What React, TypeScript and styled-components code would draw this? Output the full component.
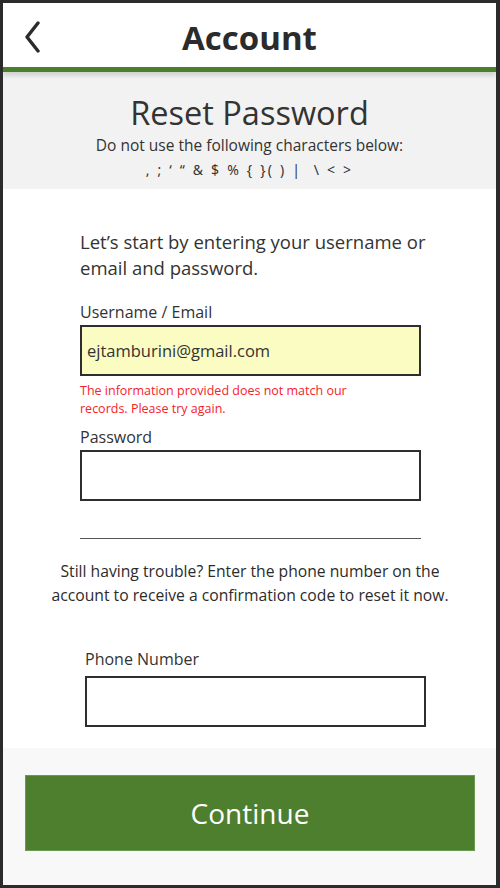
import React from "react";
import styled, { createGlobalStyle } from "styled-components";

const Global = createGlobalStyle`
  html, body { margin: 0; padding: 0; background: #2b2b2b; }
  * { box-sizing: border-box; }
  body { font-family: "Open Sans", "Noto Sans", Arial, sans-serif; color: #333; }
`;

const Frame = styled.div`
  width: 500px;
  height: 888px;
  border-style: solid;
  border-color: #2b2b2b;
  border-width: 3px 4px 3px 3px;
  display: flex;
  flex-direction: column;
  background: #fff;
  overflow: hidden;
`;

const Header = styled.header`
  position: relative;
  height: 64px;
  flex: none;
  display: flex;
  align-items: center;
  justify-content: center;
  background: #fff;
`;

const BackButton = styled.button`
  position: absolute;
  left: 20px;
  top: 18px;
  width: 18px;
  height: 32px;
  border: 0;
  padding: 0;
  background: none;
  display: flex;
`;

const HeaderTitle = styled.h1`
  margin: 0;
  font-size: 33px;
  font-weight: 700;
  color: #2b2b2b;
  line-height: 1;
  transform: translateY(2px);
`;

const GreenBar = styled.div`
  height: 5px;
  flex: none;
  background: #4a7f2d;
  position: relative;
  z-index: 2;
  box-shadow: 0 3px 5px rgba(0, 0, 0, 0.18);
`;

const Banner = styled.section`
  height: 117px;
  flex: none;
  background: #f2f2f2;
  display: flex;
  flex-direction: column;
  align-items: center;
  padding-top: 20px;
`;

const BannerTitle = styled.h2`
  margin: 0;
  font-size: 32.5px;
  font-weight: 400;
  line-height: 42px;
  color: #333;
`;

const BannerNote = styled.p`
  margin: 0;
  font-size: 15.5px;
  line-height: 22px;
  color: #333;
`;

const CharList = styled.p`
  margin: 3px 0 0;
  font-family: "Noto Sans", "DejaVu Sans", sans-serif;
  font-size: 14px;
  line-height: 22px;
  color: #333;
  white-space: pre;
  letter-spacing: 2.2px;
`;

const Content = styled.main`
  flex: 1;
  background: #fff;
  display: flex;
  flex-direction: column;
  padding: 40px 0 0 77px;
`;

const Intro = styled.p`
  margin: 0 0 20px;
  width: 360px;
  font-size: 18.5px;
  line-height: 26px;
  color: #333;
`;

const Field = styled.div<{ $shift?: number; $labelGap?: number }>`
  display: flex;
  flex-direction: column;
  margin-left: ${(p) => p.$shift ?? 0}px;
  width: 341px;

  & > label {
    margin-bottom: ${(p) => p.$labelGap ?? 2}px;
  }
`;

const Label = styled.label`
  font-size: 16px;
  line-height: 22px;
  color: #333;
`;

const Input = styled.div<{ $filled?: boolean }>`
  height: 51px;
  border: 2px solid #2e2e2e;
  background: ${(p) => (p.$filled ? "#fbfcc2" : "#fff")};
  display: flex;
  align-items: center;
  padding-left: 5px;
  font-size: 16.5px;
  color: #333;
`;

const ErrorText = styled.p`
  margin: 6px 0 9px;
  width: 290px;
  font-size: 12.5px;
  line-height: 17.5px;
  color: #f5222a;
`;

const Divider = styled.hr`
  margin: 37px 0 0 0;
  width: 341px;
  border: 0;
  border-top: 1px solid #555;
`;

const Help = styled.p`
  margin: 20px 0 41px -30px;
  width: 400px;
  text-align: center;
  font-size: 15.7px;
  line-height: 24px;
  color: #2b2b2b;
`;

const Footer = styled.footer`
  height: 137px;
  flex: none;
  background: #f8f8f8;
  padding: 27px 21px 0 22px;
`;

const ContinueButton = styled.button`
  width: 100%;
  height: 76px;
  border: 1px solid #6a9a4f;
  background: #4d7f2f;
  color: #fff;
  font-family: "Open Sans", "Noto Sans", Arial, sans-serif;
  font-size: 28px;
  font-weight: 400;
  padding: 0;
`;

export default function App() {
  return (
    <>
      <Global />
      <Frame>
        <Header>
          <BackButton aria-label="Back">
            <svg width="18" height="32" viewBox="0 0 18 32">
              <polyline
                points="15,2 4,16 15,30"
                fill="none"
                stroke="#2b2b2b"
                strokeWidth="3.4"
                strokeLinecap="round"
                strokeLinejoin="round"
              />
            </svg>
          </BackButton>
          <HeaderTitle>Account</HeaderTitle>
        </Header>
        <GreenBar />
        <Banner>
          <BannerTitle>Reset Password</BannerTitle>
          <BannerNote>Do not use the following characters below:</BannerNote>
          <CharList>{", ; ‘ “ & $ % { }( ) |  \\ < >"}</CharList>
        </Banner>
        <Content>
          <Intro>Let’s start by entering your username or email and password.</Intro>
          <Field>
            <Label>Username / Email</Label>
            <Input $filled>ejtamburini@gmail.com</Input>
            <ErrorText>
              The information provided does not match our records. Please try again.
            </ErrorText>
            <Label>Password</Label>
            <Input />
          </Field>
          <Divider />
          <Help>
            Still having trouble? Enter the phone number on the account to receive a
            confirmation code to reset it now.
          </Help>
          <Field $shift={5} $labelGap={6}>
            <Label>Phone Number</Label>
            <Input />
          </Field>
        </Content>
        <Footer>
          <ContinueButton>Continue</ContinueButton>
        </Footer>
      </Frame>
    </>
  );
}
